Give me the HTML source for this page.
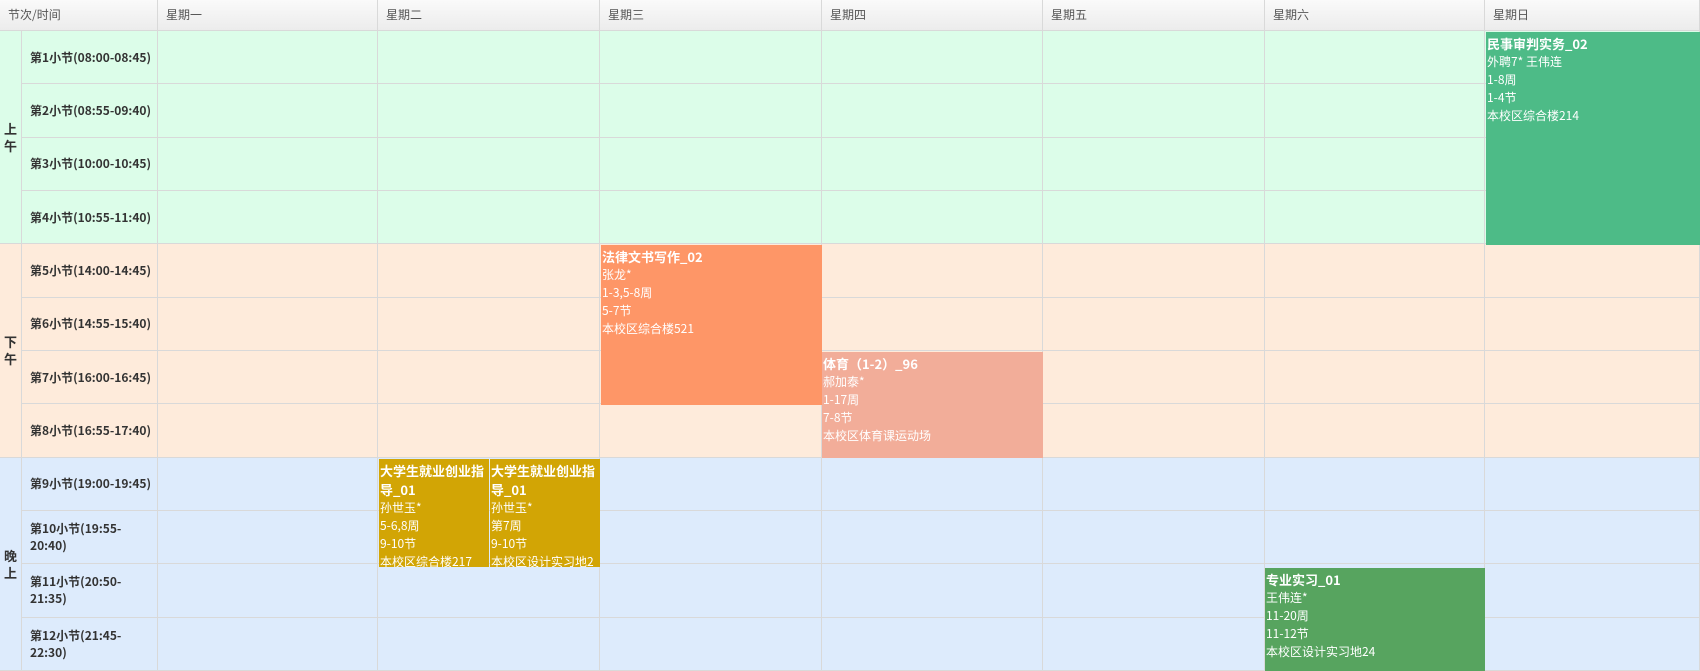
<!DOCTYPE html>
<html><head><meta charset="utf-8"><style>
*{margin:0;padding:0;box-sizing:border-box}
body{width:1700px;height:671px;overflow:hidden;background:#fff;font-family:"Noto Sans CJK SC","Liberation Sans",sans-serif;position:relative}
.g{display:grid;grid-template-columns:22px 136px 220px 222px 222px 221px 222px 220px 215px;grid-template-rows:31px repeat(12,1fr);width:1700px;height:671px}
.g>div{border-right:1px solid #d9d9d9;border-bottom:1px solid #d9d9d9}
.h{background:linear-gradient(#fafafa,#ececec);font-size:12px;color:#555;padding:6px 0 0 8px}
.a{background:#dcfde9}.p{background:#feebdb}.e{background:#ddebfc}
.t{font-size:12px;font-weight:bold;color:#333;padding-left:8px;display:flex;align-items:center;line-height:17px}
.s{font-size:13px;font-weight:bold;color:#333;display:flex;align-items:center;justify-content:center;text-align:center;line-height:17px}
.b{position:absolute;color:#fff;font-size:12px;line-height:18px;padding:2px 1px;overflow:hidden}
.b b{display:block;font-size:13px;line-height:19px}
</style></head><body>
<div class="g">
<div class="h" style="grid-column:1/3">节次/时间</div><div class="h">星期一</div><div class="h">星期二</div><div class="h">星期三</div><div class="h">星期四</div><div class="h">星期五</div><div class="h">星期六</div><div class="h">星期日</div>
<div class="s a" style="grid-row:2/6;grid-column:1">上<br>午</div>
<div class="t a">第1小节(08:00-08:45)</div><div class="a"></div><div class="a"></div><div class="a"></div><div class="a"></div><div class="a"></div><div class="a"></div><div class="a"></div>
<div class="t a">第2小节(08:55-09:40)</div><div class="a"></div><div class="a"></div><div class="a"></div><div class="a"></div><div class="a"></div><div class="a"></div><div class="a"></div>
<div class="t a">第3小节(10:00-10:45)</div><div class="a"></div><div class="a"></div><div class="a"></div><div class="a"></div><div class="a"></div><div class="a"></div><div class="a"></div>
<div class="t a">第4小节(10:55-11:40)</div><div class="a"></div><div class="a"></div><div class="a"></div><div class="a"></div><div class="a"></div><div class="a"></div><div class="a"></div>
<div class="s p" style="grid-row:6/10;grid-column:1">下<br>午</div>
<div class="t p">第5小节(14:00-14:45)</div><div class="p"></div><div class="p"></div><div class="p"></div><div class="p"></div><div class="p"></div><div class="p"></div><div class="p"></div>
<div class="t p">第6小节(14:55-15:40)</div><div class="p"></div><div class="p"></div><div class="p"></div><div class="p"></div><div class="p"></div><div class="p"></div><div class="p"></div>
<div class="t p">第7小节(16:00-16:45)</div><div class="p"></div><div class="p"></div><div class="p"></div><div class="p"></div><div class="p"></div><div class="p"></div><div class="p"></div>
<div class="t p">第8小节(16:55-17:40)</div><div class="p"></div><div class="p"></div><div class="p"></div><div class="p"></div><div class="p"></div><div class="p"></div><div class="p"></div>
<div class="s e" style="grid-row:10/14;grid-column:1">晚<br>上</div>
<div class="t e">第9小节(19:00-19:45)</div><div class="e"></div><div class="e"></div><div class="e"></div><div class="e"></div><div class="e"></div><div class="e"></div><div class="e"></div>
<div class="t e">第10小节(19:55-<br>20:40)</div><div class="e"></div><div class="e"></div><div class="e"></div><div class="e"></div><div class="e"></div><div class="e"></div><div class="e"></div>
<div class="t e">第11小节(20:50-<br>21:35)</div><div class="e"></div><div class="e"></div><div class="e"></div><div class="e"></div><div class="e"></div><div class="e"></div><div class="e"></div>
<div class="t e">第12小节(21:45-<br>22:30)</div><div class="e"></div><div class="e"></div><div class="e"></div><div class="e"></div><div class="e"></div><div class="e"></div><div class="e"></div>
</div>
<div class="b" style="left:1486px;top:32px;width:214px;height:213px;background:#4dbb87"><b>民事审判实务_02</b>外聘7* 王伟连<br>1-8周<br>1-4节<br>本校区综合楼214</div>
<div class="b" style="left:601px;top:245px;width:221px;height:160px;background:#fe9667"><b>法律文书写作_02</b>张龙*<br>1-3,5-8周<br>5-7节<br>本校区综合楼521</div>
<div class="b" style="left:822px;top:352px;width:221px;height:106px;background:#f2ad99"><b>体育（1-2）_96</b>郝加泰*<br>1-17周<br>7-8节<br>本校区体育课运动场</div>
<div class="b" style="left:379px;top:459px;width:110px;height:108px;background:#d2a505"><b>大学生就业创业指导_01</b>孙世玉*<br>5-6,8周<br>9-10节<br>本校区综合楼217</div>
<div class="b" style="left:490px;top:459px;width:110px;height:108px;background:#d2a505"><b>大学生就业创业指导_01</b>孙世玉*<br>第7周<br>9-10节<br>本校区设计实习地2</div>
<div class="b" style="left:1265px;top:568px;width:220px;height:103px;background:#57a45f"><b>专业实习_01</b>王伟连*<br>11-20周<br>11-12节<br>本校区设计实习地24</div>
</body></html>
